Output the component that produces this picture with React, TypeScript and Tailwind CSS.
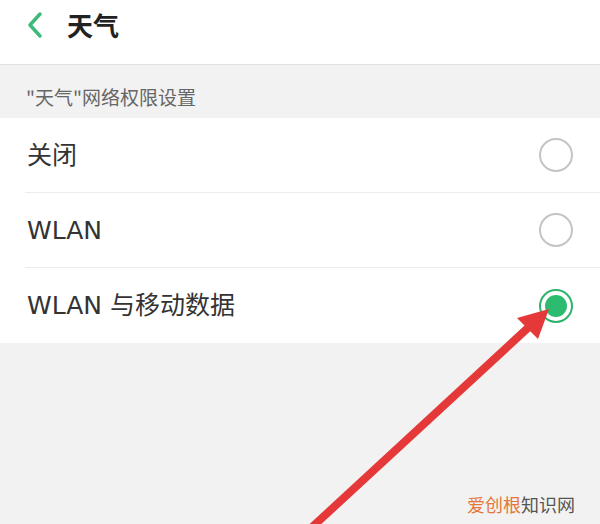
import React from "react";

const font = { fontFamily: '"DejaVu Sans", "Noto Sans CJK SC", sans-serif' };
const cjk = { fontFamily: '"Noto Sans CJK SC", "Noto Sans", sans-serif' };

function Radio({ checked }: { checked?: boolean }) {
  return checked ? (
    <div className="w-[34px] h-[34px] rounded-full border-2 border-[#2fb36c] flex items-center justify-center">
      <div className="w-[22px] h-[22px] rounded-full bg-[#2dbb6f]" />
    </div>
  ) : (
    <div className="w-[34px] h-[34px] rounded-full border-2 border-[#c4c4c4]" />
  );
}

function Row({ label, checked, last }: { label: string; checked?: boolean; last?: boolean }) {
  return (
    <div className="pl-[25px]">
      <div
        className={`h-[75px] flex items-center justify-between pr-[27px] ${
          last ? "" : "border-b border-[#ececec]"
        }`}
      >
        <span className="text-[25px] text-[#333] pl-[2px] leading-none" style={font}>{label}</span>
        <Radio checked={checked} />
      </div>
    </div>
  );
}

export default function App() {
  return (
    <div className="relative w-[600px] h-[524px] bg-[#f2f2f2] overflow-hidden" style={cjk}>
      <div className="h-[65px] bg-white border-b border-[#e2e2e2] flex items-center pb-[14px]">
        <svg width="20" height="28" viewBox="0 0 20 28" className="ml-[25px]">
          <path d="M15 3 L5 14 L15 25" fill="none" stroke="#3dba7a" strokeWidth="3.5" strokeLinecap="round" strokeLinejoin="round" />
        </svg>
        <span className="ml-[22px] text-[26px] font-bold text-[#222] leading-none">天气</span>
      </div>
      <div className="h-[53px] flex items-center pl-[26px] pt-[9px]">
        <span className="text-[19px] text-[#666] leading-none">"天气"网络权限设置</span>
      </div>
      <div className="bg-white">
        <Row label="关闭" />
        <Row label="WLAN" />
        <Row label="WLAN 与移动数据" checked last />
      </div>
      <svg className="absolute left-0 top-0" width="600" height="524" viewBox="0 0 600 524">
        <line x1="309" y1="530" x2="530" y2="326" stroke="#e53838" strokeWidth="8" />
        <polygon points="549,309 517,318 538,339" fill="#e53838" />
      </svg>
      <div className="absolute left-[467px] top-[492px] text-[18px] leading-[24px]">
        <span className="text-[#e4773a]">爱创根</span>
        <span className="text-[#555]">知识网</span>
      </div>
    </div>
  );
}
